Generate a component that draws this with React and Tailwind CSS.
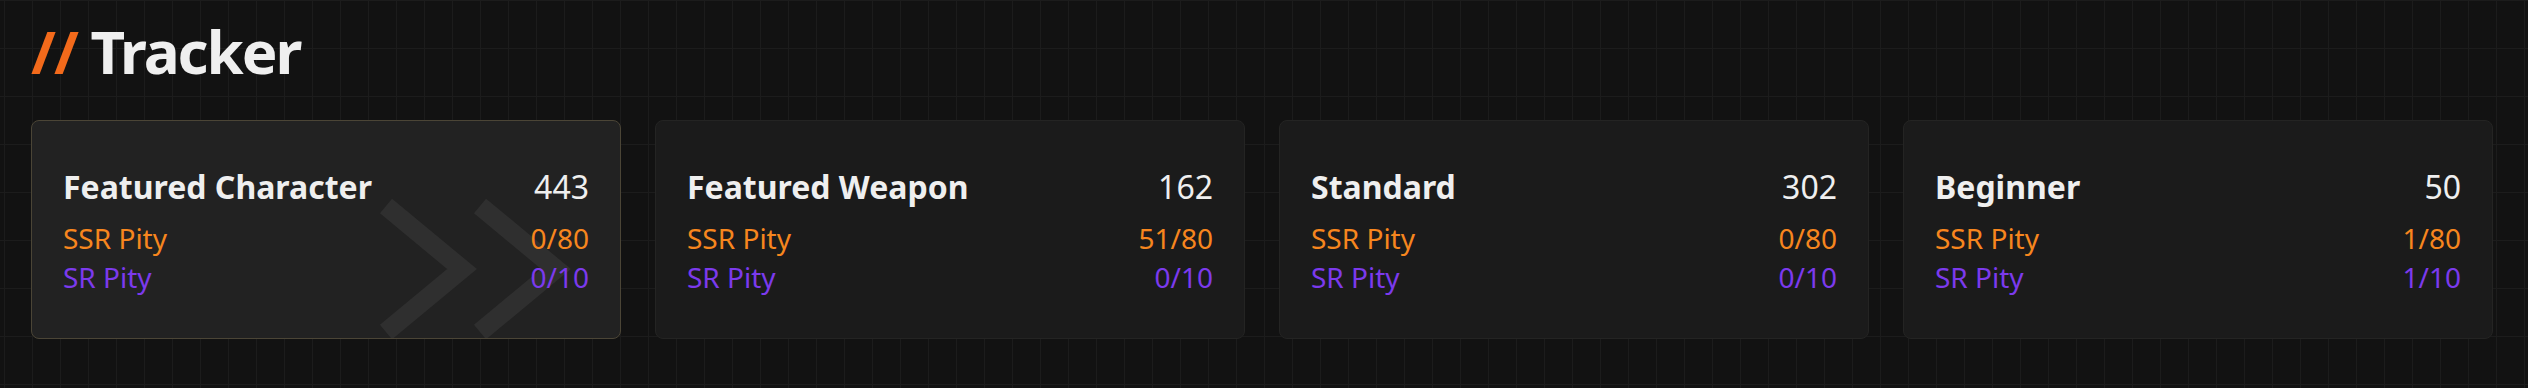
import React from 'react';

const banners = [
    { name: 'Featured Character', total: 443, ssr: '0/80', sr: '0/10', active: true },
    { name: 'Featured Weapon', total: 162, ssr: '51/80', sr: '0/10' },
    { name: 'Standard', total: 302, ssr: '0/80', sr: '0/10' },
    { name: 'Beginner', total: 50, ssr: '1/80', sr: '1/10' },
];

const Chevrons = () => (
    <svg
        className="absolute left-0 top-0 pointer-events-none"
        width="590"
        height="219"
        viewBox="0 0 590 219"
        fill="none"
    >
        <path d="M354 85 L430 148 L354 211" stroke="#2f2f2f" strokeWidth="19" strokeLinejoin="miter" strokeLinecap="butt" />
        <path d="M448 85 L524 148 L448 211" stroke="#2f2f2f" strokeWidth="19" strokeLinejoin="miter" strokeLinecap="butt" />
    </svg>
);

const BannerCard = ({ banner }) => (
    <div
        className={`relative overflow-hidden rounded-lg border h-[219px] px-[31px] pt-[42px] pb-[40px] ${banner.active ? 'bg-[#222222] border-[#4b4536]' : 'bg-[#1b1b1b] border-[#242423]'}`}
    >
        {banner.active && <Chevrons />}
        <div className="relative">
            <div className="flex items-baseline justify-between mb-2 text-[32px] leading-[48px] text-[#efefef]">
                <span className="font-bold">{banner.name}</span>
                <span>{banner.total}</span>
            </div>
            <div className="flex justify-between text-[28px] leading-[39px] text-[#f7861e]">
                <span>SSR Pity</span>
                <span>{banner.ssr}</span>
            </div>
            <div className="flex justify-between text-[28px] leading-[39px] text-[#7c3aed]">
                <span>SR Pity</span>
                <span>{banner.sr}</span>
            </div>
        </div>
    </div>
);

const App = () => {
    return (
        <div
            className="min-h-screen bg-[#121212] bg-[linear-gradient(to_right,#1c1c1c_1px,transparent_1px),linear-gradient(to_bottom,#1c1c1c_1px,transparent_1px)] bg-size-[28px_48px] bg-position-[4px_0px] pl-[31px] pr-[35px] pt-[21px] font-['Noto_Sans',sans-serif]"
        >
            <h1 className="text-[60px] leading-[60px] font-bold tracking-[-2px] text-[#efefef] mb-[39px]">
                <span className="text-[#f36a1b]">//</span> Tracker
            </h1>
            <div className="grid grid-cols-4 gap-[34px]">
                {banners.map((b) => (
                    <BannerCard key={b.name} banner={b} />
                ))}
            </div>
        </div>
    );
};

export default App;
